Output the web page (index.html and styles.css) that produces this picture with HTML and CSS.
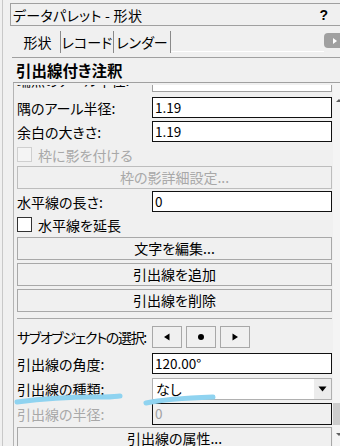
FILE: index.html
```html
<!DOCTYPE html>
<html lang="ja">
<head>
<meta charset="utf-8">
<link rel="stylesheet" href="styles.css">
</head>
<body>
<div class="app">
  <div class="gutter"></div>
  <div class="palette">
    <div class="titlebar">
      <span class="title">データパレット - 形状</span>
      <span class="help">?</span>
    </div>
    <div class="tabs">
      <div class="tab t1">形状</div>
      <div class="tab t2">レコード</div>
      <div class="tab t3">レンダー</div>
      <div class="tab-fill"></div>
      <div class="tab-more"><svg width="8" height="8" viewBox="0 0 8 8"><path d="M2 1 L6 4 L2 7 Z" fill="#fff"/></svg></div>
    </div>
    <div class="section-header">引出線付き注釈</div>
    <div class="body">
      <div class="viewport">
        <div class="list">
          <div class="row partial"><span class="label">端点のアール半径:</span><span class="field dim">-</span></div>
          <div class="row r-first"><span class="label">隅のアール半径:</span><span class="field">1.19</span></div>
          <div class="row"><span class="label">余白の大きさ:</span><span class="field">1.19</span></div>
          <div class="check disabled"><span class="box"></span><span>枠に影を付ける</span></div>
          <div class="btn disabled b-shadow">枠の影詳細設定...</div>
          <div class="row r-hline"><span class="label">水平線の長さ:</span><span class="field">0</span></div>
          <div class="check c-ext"><span class="box"></span><span>水平線を延長</span></div>
          <div class="btn b-edit">文字を編集...</div>
          <div class="btn">引出線を追加</div>
          <div class="btn">引出線を削除</div>
          <div class="sep"></div>
          <div class="row r-sub"><span class="label tight">サブオブジェクトの選択:</span>
            <span class="subbtns">
              <span class="sbtn"><svg width="8" height="8" viewBox="0 0 8 8"><path d="M6.5 0.5 L1 4 L6.5 7.5 Z" fill="#000"/></svg></span>
              <span class="sbtn"><svg width="8" height="8" viewBox="0 0 8 8"><circle cx="4" cy="4" r="3" fill="#000"/></svg></span>
              <span class="sbtn"><svg width="8" height="8" viewBox="0 0 8 8"><path d="M1.5 0.5 L7 4 L1.5 7.5 Z" fill="#000"/></svg></span>
            </span>
          </div>
          <div class="row r-angle"><span class="label">引出線の角度:</span><span class="field">120.00°</span></div>
          <div class="row r-type"><span class="label">引出線の種類:</span>
            <span class="select"><span class="sel-text">なし</span><span class="sel-arrow"><svg width="9" height="6" viewBox="0 0 9 6"><path d="M0.5 0.5 L8.5 0.5 L4.5 5.5 Z" fill="#000"/></svg></span></span>
          </div>
          <div class="row r-radius"><span class="label gray">引出線の半径:</span><span class="field disabled">0</span></div>
          <div class="btn b-attr">引出線の属性...</div>
        </div>
      </div>
      <div class="scrollbar">
        <span class="arrow up"></span>
        <span class="thumb"></span>
        <span class="arrow down"></span>
      </div>
    </div>
  </div>
  <svg class="scribble" width="340" height="446" viewBox="0 0 340 446">
    <path d="M17 402 C 40 399, 70 397, 95 397 S 116 396, 120 396" stroke="#8fd3f0" stroke-width="5" fill="none" stroke-linecap="round"/>
    <path d="M146 403 C 160 400, 185 398, 213 397" stroke="#8fd3f0" stroke-width="5" fill="none" stroke-linecap="round"/>
  </svg>
</div>
</body>
</html>
```

FILE: styles.css
```css
* { box-sizing: border-box; }
html, body {
  margin: 0;
  padding: 0;
  width: 340px;
  height: 446px;
  overflow: hidden;
  background: #f0f0f0;
  font-family: "Noto Sans CJK JP", "Noto Sans", sans-serif;
  font-feature-settings: "palt";
  color: #000;
}
.app {
  position: relative;
  display: flex;
  width: 340px;
  height: 446px;
}
.gutter {
  width: 10px;
  flex: none;
  border-left: 1px solid #c8c8c8;
  margin-left: 2px;
}
.palette {
  flex: 1;
  display: flex;
  flex-direction: column;
  min-width: 0;
}
.titlebar {
  margin-top: 3px;
  height: 23px;
  border: 1px solid #a0a0a0;
  border-right: none;
  display: flex;
  align-items: center;
  justify-content: space-between;
  padding: 0 12px 0 2px;
  margin-left: -2px;
  flex: none;
}
.title {
  font-size: 14px;
  line-height: 14px;
  letter-spacing: 0.3px;
}
.help {
  font-family: "Liberation Sans", sans-serif;
  font-weight: bold;
  font-size: 14px;
}
.tabs {
  height: 32px;
  display: flex;
  align-items: stretch;
  padding-top: 5px;
  border-bottom: 1px solid #a0a0a0;
  flex: none;
}
.tab {
  font-size: 14px;
  line-height: 20px;
  border-right: 1px solid #8a8a8a;
  display: flex;
  align-items: center;
  justify-content: center;
  margin-bottom: 4px;
  flex: none;
}
.t1 { width: 49px; padding-left: 3px; }
.t2 { width: 53px; }
.t3 { width: 57px; }
.tab-fill {
  flex: 1;
  border-bottom: 1px solid #fff;
  margin-bottom: 5px;
}
.tab-more {
  width: 16px;
  height: 15px;
  margin-top: 2px;
  border-radius: 4px 0 0 4px;
  background: #a0a0a0;
  display: flex;
  align-items: center;
  justify-content: flex-end;
  padding-right: 1px;
  align-self: flex-start;
}
.section-header {
  height: 25px;
  border-bottom: 1px solid #a0a0a0;
  font-size: 15.5px;
  font-weight: bold;
  line-height: 24px;
  padding-left: 3px;
  margin-left: 1px;
  flex: none;
}
.body {
  flex: 1;
  display: flex;
  border-left: 1px solid #b4b4b4;
  margin-left: 1px;
  min-height: 0;
}
.viewport {
  flex: 1;
  overflow: hidden;
  margin-top: 2px;
}
.list {
  display: flex;
  flex-direction: column;
  padding-left: 3px;
}
.row {
  display: flex;
  align-items: center;
  height: 21px;
  margin-top: 3px;
  flex: none;
}
.row.partial { margin-top: -14px; }
.row.partial .label { margin-top: -3px; }
.row.r-first { margin-top: 5px; }
.label {
  width: 135px;
  flex: none;
  font-size: 14px;
  white-space: nowrap;
}
.label.tight { letter-spacing: -1.3px; }
.label.gray, .check.disabled { color: #a8a8a8; }
.field {
  width: 180px;
  height: 21px;
  flex: none;
  border: 1.5px solid #111;
  background: #fff;
  font-size: 13.5px;
  line-height: 18px;
  padding-left: 2px;
}
.field.dim { border: 1px solid #a0a0a0; border-top: none; line-height: 22px; }
.field.disabled { background: #f0f0f0; color: #a0a0a0; }
.check {
  display: flex;
  align-items: center;
  height: 19px;
  margin-top: 3px;
  font-size: 14px;
  flex: none;
}
.check .box {
  width: 15px;
  height: 15px;
  border: 1px solid #333;
  background: #fff;
  margin-right: 6px;
}
.check.disabled .box { border-color: #cfcfcf; background: #f4f4f4; }
.btn {
  height: 23px;
  margin-top: 3px;
  width: 315px;
  border: 1px solid #a8a8a8;
  background: #f0f0f0;
  font-size: 14px;
  text-align: center;
  line-height: 21px;
  flex: none;
}
.btn.disabled { color: #a8a8a8; border-color: #bdbdbd; }
.b-shadow { margin-top: 2px; }
.r-hline { margin-top: 2px; }
.sep {
  height: 1px;
  width: 315px;
  margin-top: 6px;
  background: #a8a8a8;
  flex: none;
}
.r-sub { margin-top: 7px; height: 22px; }
.subbtns { display: flex; gap: 4px; }
.sbtn {
  width: 30px;
  height: 22px;
  border: 1px solid #a8a8a8;
  display: flex;
  align-items: center;
  justify-content: center;
}
.r-angle { margin-top: 5px; }
.r-type { margin-top: 4px; height: 22px; }
.select {
  width: 180px;
  height: 22px;
  flex: none;
  border: 1px solid #b0b0b0;
  background: #fff;
  display: flex;
  align-items: center;
  justify-content: space-between;
  font-size: 14px;
  padding-left: 3px;
}
.sel-arrow {
  width: 17px;
  height: 20px;
  background: #ececec;
  display: flex;
  align-items: center;
  justify-content: center;
}
.r-radius { margin-top: 3px; height: 22px; }
.r-radius .field { height: 22px; }
.b-attr { margin-top: 2px; }
.scrollbar {
  width: 7px;
  flex: none;
  position: relative;
  background: #f4f4f4;
}
.thumb {
  position: absolute;
  left: 0;
  top: 320px;
  width: 7px;
  height: 22px;
  background: #cdcdcd;
}
.arrow {
  position: absolute;
  left: 3px;
  width: 0;
  height: 0;
  border-left: 3px solid transparent;
  border-right: 3px solid transparent;
}
.arrow.up { top: 16px; border-bottom: 3px solid #606060; }
.arrow.down { top: 350px; border-top: 3px solid #606060; }
.scribble {
  position: absolute;
  left: 0;
  top: 0;
  pointer-events: none;
}
```
